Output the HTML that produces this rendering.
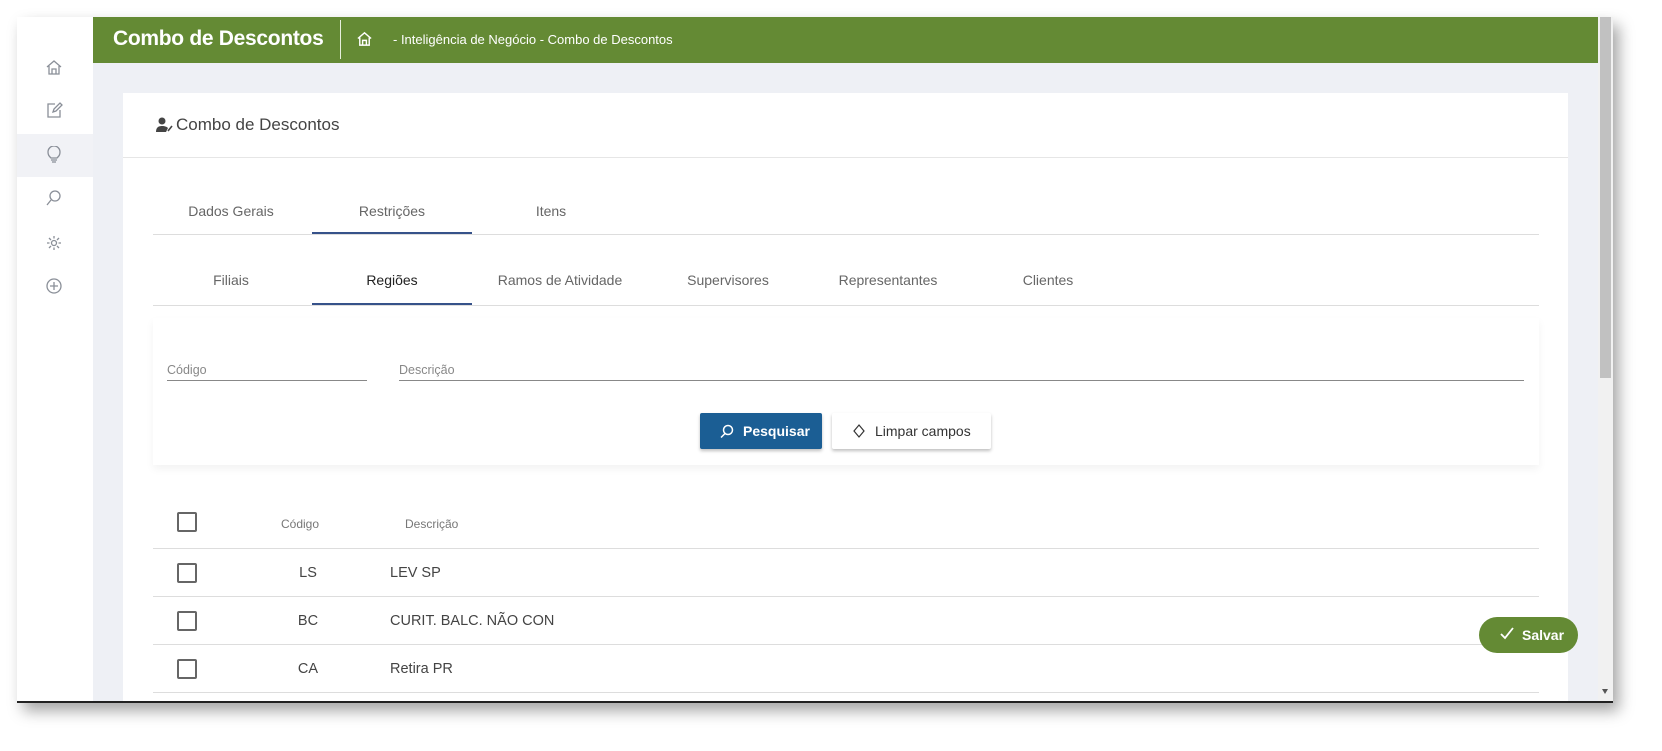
<!DOCTYPE html>
<html><head><meta charset="utf-8"><style>
*{box-sizing:border-box;margin:0;padding:0}
body{width:1662px;height:751px;background:#fff;font-family:"Liberation Sans",sans-serif;position:relative;overflow:hidden;color:#555}
.win{position:absolute;left:17px;top:17px;width:1596px;height:686px;background:#eef0f5;box-shadow:6px 8px 14px rgba(0,0,0,.35);overflow:hidden;border-bottom:2px solid #222}
.side{position:absolute;left:0;top:0;width:76px;height:686px;background:#fff}
.side .act{position:absolute;left:0;top:117px;width:76px;height:43px;background:#f1f2f6}
.side svg{position:absolute;left:28px;width:18px;height:18px;fill:none;stroke:#8a8f98;stroke-width:1.3}
.hdr{position:absolute;left:76px;top:0;width:1505px;height:46px;background:#648a34;color:#fff}
.hdr .t{position:absolute;left:20px;top:10px;font-size:21px;font-weight:bold;letter-spacing:-0.3px}
.hdr .dv{position:absolute;left:247px;top:3px;width:1px;height:39px;background:#e6eedc}
.hdr .bc{position:absolute;left:300px;top:15px;font-size:13px}
.hdr svg{position:absolute;left:263px;top:13px;width:17px;height:17px;fill:none;stroke:#fff;stroke-width:1.5}
.sb{position:absolute;left:1581px;top:0;width:15px;height:686px;background:#f1f1f1}
.sb .th{position:absolute;left:2px;top:0;width:11px;height:361px;background:#c1c1c1}
.card{position:absolute;left:106px;top:76px;width:1445px;height:620px;background:#fff}
.ch{position:absolute;left:0;top:0;width:100%;height:65px;border-bottom:1px solid #e6e6e6}
.ch span{position:absolute;left:53px;top:22px;font-size:17px;color:#444}
.tabs{position:absolute;left:30px;width:1386px;height:1px;background:#ddd}
.tab{position:absolute;font-size:14px;color:#666;width:160px;text-align:center}
.ul{position:absolute;height:3px;background:#36528a;width:160px}
.panel{position:absolute;left:30px;top:225px;width:1386px;height:147px;background:#fff;box-shadow:0 4px 8px rgba(0,0,0,.05)}
.fld{position:absolute;border-bottom:1px solid #888;font-size:12.5px;color:#888;height:18px}
.btn{position:absolute;top:320px;height:36px;border-radius:2px;font-size:14px;box-shadow:0 2px 3px rgba(0,0,0,.25)}
.row{position:absolute;left:30px;width:1386px;border-bottom:1px solid #ddd;height:48px}
.cb{position:absolute;left:24px;width:20px;height:20px;border:2px solid #666;border-radius:2px}
.c1{position:absolute;left:100px;width:110px;text-align:center;font-size:14.5px;color:#444}
.c2{position:absolute;left:237px;font-size:14.5px;color:#444}
</style></head><body>
<div class="win">
<div class="side"><div class="act"></div>
<svg style="top:41px" viewBox="0 0 18 18"><path d="M2 9L9 3l7 6M4 8v8h10V8M7 16v-5h4v5"/></svg>
<svg style="top:84px" viewBox="0 0 18 18"><path d="M10 3H3v13h12V9M8 11l1-3 6-6 2 2-6 6z"/></svg>
<svg style="top:129px" viewBox="0 0 18 18"><path d="M6 12c-2-2-3-3-3-6a6 6 0 0112 0c0 3-1 4-3 6zM6 14h6M7 16h4"/></svg>
<svg style="top:172px" viewBox="0 0 18 18"><circle cx="10" cy="7" r="5"/><path d="M6 11l-4 5"/></svg>
<svg style="top:217px" viewBox="0 0 18 18"><circle cx="9" cy="9" r="2.5"/><path d="M9 2v2.5M9 13.5V16M2 9h2.5M13.5 9H16M4 4l2 2M12 12l2 2M4 14l2-2M12 6l2-2"/></svg>
<svg style="top:260px" viewBox="0 0 18 18"><circle cx="9" cy="9" r="7"/><path d="M9 5v8M5 9h8"/></svg>
</div>
<div class="hdr"><div class="t">Combo de Descontos</div><div class="dv"></div>
<svg viewBox="0 0 18 18"><path d="M2 9L9 3l7 6M4 8v8h10V8M7 16v-5h4v5"/></svg>
<div class="bc">- Inteligência de Negócio - Combo de Descontos</div></div>
<div class="sb"><div class="th"></div><div style="position:absolute;left:4px;bottom:6px;border:3.5px solid transparent;border-top:5px solid #555"></div></div>
<div class="card">
<div class="ch"><svg style="position:absolute;left:33px;top:24px" width="18" height="16" viewBox="0 0 18 16"><circle cx="6" cy="4" r="3.5" fill="#444"/><path d="M0 15c0-5 3-6 6-6s5 1 6 2l-2 4z" fill="#444"/><path d="M12 14l4-5" stroke="#444" stroke-width="1.6"/></svg><span>Combo de Descontos</span></div>
<div class="tab" style="left:28px;top:110px">Dados Gerais</div>
<div class="tab" style="left:189px;top:110px">Restrições</div>
<div class="tab" style="left:348px;top:110px">Itens</div>
<div class="ul" style="left:189px;top:139px"></div>
<div class="tabs" style="top:141px"></div>
<div class="tab" style="left:28px;top:179px">Filiais</div>
<div class="tab" style="left:189px;top:179px;color:#222">Regiões</div>
<div class="tab" style="left:357px;top:179px">Ramos de Atividade</div>
<div class="tab" style="left:525px;top:179px">Supervisores</div>
<div class="tab" style="left:685px;top:179px">Representantes</div>
<div class="tab" style="left:845px;top:179px">Clientes</div>
<div class="ul" style="left:189px;top:210px"></div>
<div class="tabs" style="top:212px"></div>
<div class="panel"></div>
<div class="fld" style="left:44px;top:270px;width:200px">Código</div>
<div class="fld" style="left:276px;top:270px;width:1125px">Descrição</div>
<div class="btn" style="left:577px;width:122px;background:#1b5e94;color:#fff;font-weight:bold;padding:10px 0 0 43px">Pesquisar
<svg style="position:absolute;left:20px;top:11px" width="14" height="14" viewBox="0 0 14 14" fill="none" stroke="#fff" stroke-width="1.5"><circle cx="8" cy="6" r="4.5"/><path d="M5 9.5l-4 4"/></svg></div>
<div class="btn" style="left:709px;width:159px;background:#fff;color:#333;padding:10px 0 0 43px">Limpar campos
<svg style="position:absolute;left:20px;top:11px" width="14" height="14" viewBox="0 0 14 14" fill="none" stroke="#333" stroke-width="1.2"><path d="M7 1l5 6-5 6-5-6z"/></svg></div>
<div class="row" style="top:407px;height:49px"><div class="cb" style="top:12px"></div><div class="c1" style="top:17px;font-size:12px;color:#777;left:92px">Código</div><div class="c2" style="top:17px;font-size:12px;color:#777;left:252px">Descrição</div></div>
<div class="row" style="top:456px"><div class="cb" style="top:14px"></div><div class="c1" style="top:16px">LS</div><div class="c2" style="top:16px">LEV SP</div></div>
<div class="row" style="top:504px"><div class="cb" style="top:14px"></div><div class="c1" style="top:16px">BC</div><div class="c2" style="top:16px">CURIT. BALC. NÃO CON</div></div>
<div class="row" style="top:552px"><div class="cb" style="top:14px"></div><div class="c1" style="top:16px">CA</div><div class="c2" style="top:16px">Retira PR</div></div>
</div>
<div style="position:absolute;left:1462px;top:600px;width:99px;height:36px;border-radius:18px;background:#648a34;color:#fff;font-weight:bold;font-size:14px;padding:10px 0 0 43px">Salvar
<svg style="position:absolute;left:21px;top:10px" width="14" height="13" viewBox="0 0 14 13" fill="none" stroke="#fff" stroke-width="1.8"><path d="M1 7l4 4 8-10"/></svg></div>
</div>
</body></html>
